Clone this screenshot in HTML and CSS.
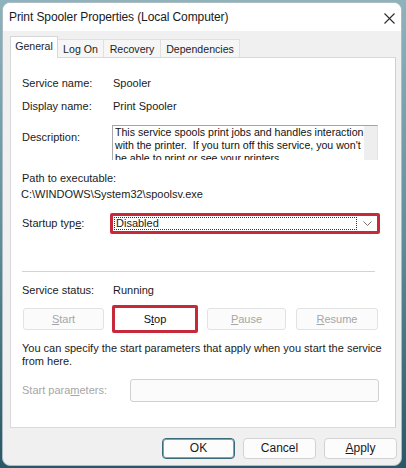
FILE: index.html
```html
<!DOCTYPE html>
<html>
<head>
<meta charset="utf-8">
<link rel="stylesheet" href="styles.css">
</head>
<body>
<div class="window">
  <div class="titlebar">
    <span class="title">Print Spooler Properties (Local Computer)</span>
    <svg class="close" width="11" height="11" viewBox="0 0 11 11"><path d="M0.5 0.5 L10.5 10.5 M10.5 0.5 L0.5 10.5" stroke="#2b2b2b" stroke-width="1.1" fill="none"/></svg>
  </div>
  <div class="body">
    <div class="tabs">
      <div class="tab active">General</div>
      <div class="tab logon">Log On</div>
      <div class="tab recovery">Recovery</div>
      <div class="tab deps">Dependencies</div>
    </div>
    <div class="panel">
      <div class="row first"><span class="label">Service name:</span><span class="value">Spooler</span></div>
      <div class="row second"><span class="label">Display name:</span><span class="value">Print Spooler</span></div>
      <div class="row desc-row">
        <span class="label desc-label">Description:</span>
        <div class="desc-box">
          <div class="desc-text">This service spools print jobs and handles interaction<br>with the printer.&nbsp; If you turn off this service, you won't<br>be able to print or see your printers.</div>
          <div class="scroll"></div>
        </div>
      </div>
      <div class="path-label">Path to executable:</div>
      <div class="path-value">C:\WINDOWS\System32\spoolsv.exe</div>
      <div class="row startup-row">
        <span class="label">Startup typ<u>e</u>:</span>
        <div class="select-hl">
          <div class="select">
            <span class="focus">Disabled</span>
            <svg class="chev" width="9" height="5" viewBox="0 0 9 5"><path d="M0.5 0.5 L4.5 4.5 L8.5 0.5" stroke="#707070" stroke-width="1" fill="none"/></svg>
          </div>
        </div>
      </div>
      <div class="sep"></div>
      <div class="row status-row"><span class="label">Service status:</span><span class="value">Running</span></div>
      <div class="btn-row">
        <div class="btn disabled b-start"><u>S</u>tart</div>
        <div class="stop-hl"><div class="btn stop">S<u>t</u>op</div></div>
        <div class="btn disabled b-pause"><u>P</u>ause</div>
        <div class="btn disabled b-resume"><u>R</u>esume</div>
      </div>
      <div class="hint">You can specify the start parameters that apply when you start the service<br>from here.</div>
      <div class="row params-row">
        <span class="label params-label">Start para<u>m</u>eters:</span>
        <div class="params-input"></div>
      </div>
    </div>
    <div class="footer">
      <div class="fbtn ok">OK</div>
      <div class="fbtn">Cancel</div>
      <div class="fbtn"><u>A</u>pply</div>
    </div>
  </div>
</div>
</body>
</html>
```

FILE: styles.css
```css
html, body {
  margin: 0;
  padding: 0;
}
body {
  width: 406px;
  height: 468px;
  overflow: hidden;
  background: linear-gradient(180deg, #8fb3bd 0%, #5f8f9c 50%, #285867 100%);
  font-family: "Liberation Sans", Arial, sans-serif;
  font-size: 11px;
  line-height: 13px;
  color: #1b1b1b;
  padding: 2px 0 0 2px;
  box-sizing: border-box;
}
.window {
  width: 400px;
  height: 464px;
  border: 1px solid #aebcc1;
  border-radius: 8px;
  background: #f0f0f0;
  overflow: hidden;
  box-sizing: border-box;
  display: flex;
  flex-direction: column;
}
.titlebar {
  height: 28px;
  background: #ffffff;
  display: flex;
  align-items: center;
  justify-content: space-between;
  padding: 0 6px 0 6px;
  flex: none;
}
.title {
  font-size: 12px;
  color: #1a1a1a;
  letter-spacing: -0.1px;
  margin-top: 1px;
}
.close {
  display: block;
  margin-top: 2px;
}
.body {
  flex: 1;
  padding: 5px 4px 0 7px;
  display: flex;
  flex-direction: column;
}
.tabs {
  display: flex;
  align-items: flex-end;
  height: 21px;
  position: relative;
  z-index: 1;
}
.tab {
  height: 18px;
  box-sizing: border-box;
  border: 1px solid #e0e0e0;
  border-bottom: none;
  background: #f6f6f6;
  font-size: 10.6px;
  display: flex;
  align-items: center;
  justify-content: center;
  padding-top: 2px;
  color: #1e1e1e;
}
.tab.active {
  height: 22px;
  width: 48px;
  background: #ffffff;
  border-color: #d6d6d6;
  margin-bottom: -1px;
  padding-top: 0;
  padding-bottom: 2px;
}
.tab.logon { width: 46px; border-left: none; }
.tab.recovery { width: 57px; border-left: none; }
.tab.deps { width: 79px; border-left: none; }
.panel {
  width: 386px;
  height: 371px;
  box-sizing: border-box;
  border: 1px solid #d9d9d9;
  border-right-color: #cfcfcf;
  background: #ffffff;
  padding: 19px 0 0 11px;
  display: flex;
  flex-direction: column;
  flex: none;
}
.row {
  display: flex;
  align-items: center;
}
.label {
  width: 91px;
  flex: none;
}
.second { margin-top: 10px; }
.desc-row {
  margin-top: 12px;
  align-items: flex-start;
}
.desc-label {
  padding-top: 6px;
}
.desc-box {
  margin-left: -1px;
  width: 266px;
  height: 35px;
  box-sizing: border-box;
  border-top: 1px solid #a3a3a3;
  border-left: 1px solid #a9a9a9;
  border-right: 1px solid #e3e3e3;
  display: flex;
  overflow: hidden;
}
.desc-text {
  flex: 1;
  padding-left: 2px;
  white-space: nowrap;
  overflow: hidden;
  font-size: 10.6px;
  color: #111;
}
.scroll {
  width: 13px;
  background: #eeeeee;
  flex: none;
}
.path-label { margin-top: 12px; }
.path-value { margin-top: 3px; margin-left: -1px; }
.startup-row { margin-top: 12px; }
.select-hl {
  margin-left: -3px;
  width: 270px;
  height: 21px;
  box-sizing: border-box;
  border: 3px solid #c62a3a;
  border-radius: 2px;
  background: #ffffff;
}
.select {
  height: 15px;
  display: flex;
  align-items: center;
  justify-content: space-between;
  padding: 0 5px 0 1px;
}
.focus {
  width: 243px;
  height: 13px;
  box-sizing: border-box;
  outline: 1px dotted #333;
  outline-offset: -1px;
  padding-left: 2px;
  line-height: 13px;
}
.chev { display: block; }
.sep {
  margin-top: 37px;
  width: 353px;
  height: 1px;
  background: #d3d3d3;
}
.status-row { margin-top: 12px; }
.btn-row {
  margin-top: 8px;
  height: 28px;
  display: flex;
  align-items: center;
}
.btn {
  height: 22px;
  box-sizing: border-box;
  border: 1px solid #e2e2e2;
  border-radius: 3px;
  background: #fbfbfb;
  display: flex;
  align-items: center;
  justify-content: center;
  font-size: 11px;
}
.btn.disabled { color: #a6a6a6; }
.b-start { margin-left: 1px; width: 81px; }
.stop-hl {
  margin-left: 8px;
  width: 86px;
  height: 28px;
  box-sizing: border-box;
  border: 3px solid #c62a3a;
  border-radius: 2px;
  background: #ffffff;
  display: flex;
}
.btn.stop {
  flex: 1;
  height: 22px;
  border: none;
  background: #ffffff;
  color: #111;
}
.b-pause { margin-left: 9px; width: 79px; }
.b-resume { margin-left: 10px; width: 82px; }
.hint { margin-top: 9px; }
.params-row { margin-top: 11px; }
.params-label {
  width: 108px;
  color: #a6a6a6;
}
.params-input {
  width: 249px;
  height: 23px;
  box-sizing: border-box;
  border: 1px solid #d0d0d0;
  border-radius: 3px;
  background: #fbfbfb;
}
.footer {
  margin-top: 10px;
  display: flex;
  justify-content: flex-end;
  gap: 8px;
}
.fbtn {
  width: 73px;
  height: 21px;
  box-sizing: border-box;
  border: 1px solid #d2d2d2;
  border-radius: 4px;
  background: #fcfcfc;
  display: flex;
  align-items: center;
  justify-content: center;
  font-size: 12px;
  color: #1a1a1a;
}
.fbtn.ok {
  border: 1px solid #3a6a78;
  box-shadow: inset 0 0 0 1px #7fa3ad;
}
```
